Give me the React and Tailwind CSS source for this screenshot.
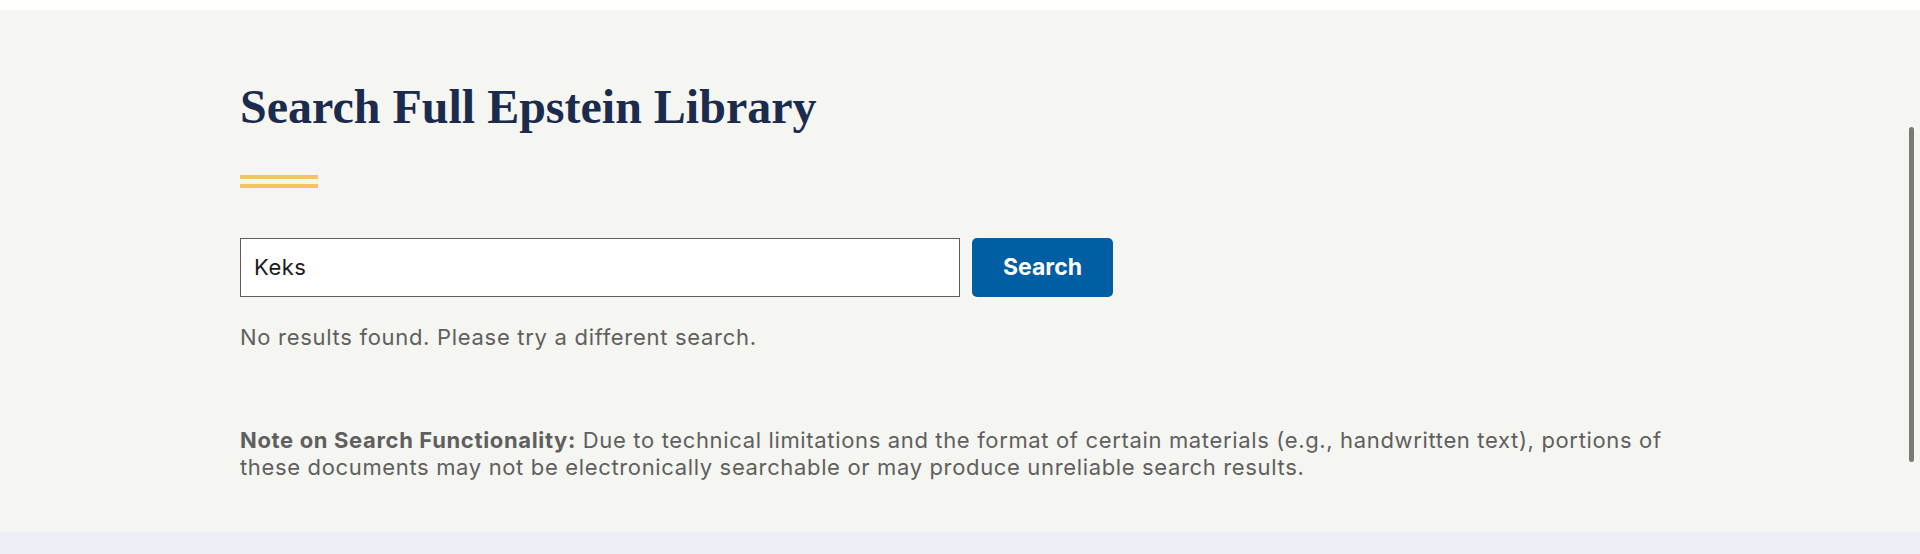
export default function App() {
  return (
    <div className="relative min-h-screen bg-white">
      <div className="h-[10px] bg-white" />
      <section className="h-[522px] bg-[#f5f5f1]">
        <div className="mx-auto max-w-[1440px] pt-[68px]">
          <h1 className="font-['Liberation_Serif',serif] text-[48px] font-bold leading-[1.2] text-[#1b2b4d]">
            Search Full Epstein Library
          </h1>
          <div className="mt-[39px] flex w-[78px] flex-col gap-[5px]">
            <div className="h-[4px] bg-[#f6c35c]" />
            <div className="h-[4px] bg-[#f6c35c]" />
          </div>
          <form className="mt-[50px] flex gap-[12px]" onSubmit={(e) => e.preventDefault()}>
            <input
              defaultValue="Keks"
              className="h-[59px] w-[720px] border border-[#5f5f5f] bg-white px-[13px] font-['Inter',sans-serif] text-[22px] tracking-[0.5px] text-[#1b1b1b] outline-none"
            />
            <button
              type="submit"
              className="h-[59px] w-[141px] rounded-[5px] bg-[#005ea2] font-['Inter',sans-serif] text-[23px] font-bold text-white"
            >
              Search
            </button>
          </form>
          <p className="mt-[24px] font-['Inter',sans-serif] text-[22px] leading-[33px] tracking-[0.7px] text-[#5f5f5f]">
            No results found. Please try a different search.
          </p>
          <p className="mt-[73px] font-['Inter',sans-serif] text-[22px] leading-[27px] tracking-[0.65px] text-[#5f5f5f]">
            <strong className="font-bold">Note on Search Functionality:</strong> Due to technical limitations and the format of certain materials (e.g., handwritten text), portions of these documents may not be electronically searchable or may produce unreliable search results.
          </p>
        </div>
      </section>
      <div className="h-[22px] bg-[#eceff6]" />
      <div className="absolute left-[1909px] top-[127px] h-[335px] w-[5px] rounded-full bg-[#7a7a74]" />
    </div>
  );
}
